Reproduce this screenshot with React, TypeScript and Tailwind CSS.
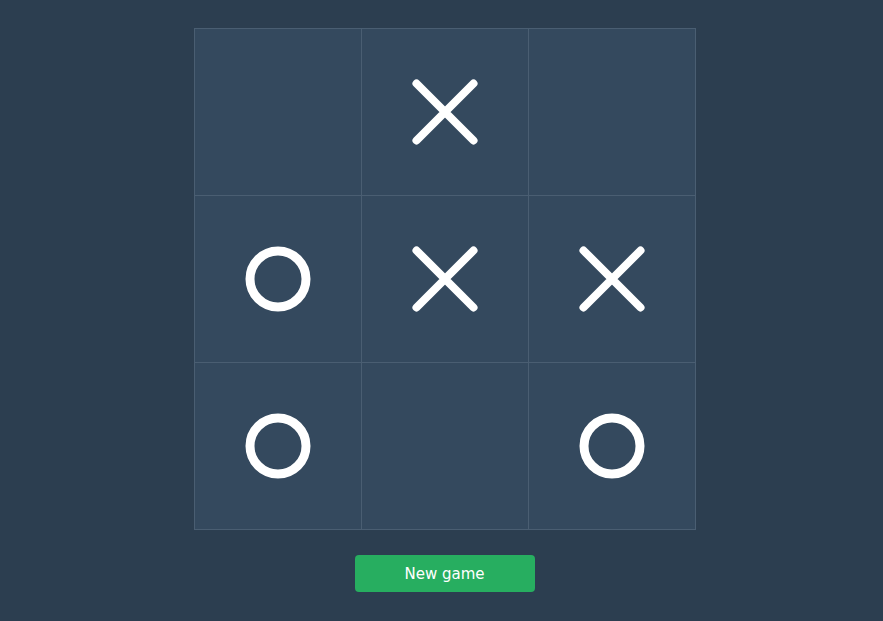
import React, { useState } from 'react';

type Mark = 'X' | 'O' | null;

const START: Mark[] = [null, 'X', null, 'O', 'X', 'X', 'O', null, 'O'];

const Cross = () => (
  <svg width="70" height="70" viewBox="0 0 70 70">
    <path d="M6.5 6.5 L63.5 63.5 M63.5 6.5 L6.5 63.5" stroke="#ffffff" strokeWidth="8" strokeLinecap="round" fill="none" />
  </svg>
);

const Nought = () => (
  <svg width="70" height="70" viewBox="0 0 70 70">
    <circle cx="35" cy="35" r="28" stroke="#ffffff" strokeWidth="9" fill="none" />
  </svg>
);

export default function App() {
  const [cells, setCells] = useState<Mark[]>(START);

  return (
    <div className="min-h-[621px] w-full bg-[#2c3e50] flex flex-col items-center pt-[28px] pl-[6px] font-['DejaVu_Sans',Verdana,sans-serif]">
      <div className="grid grid-cols-[repeat(3,166px)] gap-px p-px bg-[#4a5e72]">
        {cells.map((c, i) => (
          <div key={i} className="w-[166px] h-[166px] bg-[#34495e] flex items-center justify-center">
            {c === 'X' && <Cross />}
            {c === 'O' && <Nought />}
          </div>
        ))}
      </div>
      <button
        type="button"
        onClick={() => setCells(Array(9).fill(null))}
        className="mt-[25px] w-[180px] h-[37px] rounded-[4px] bg-[#27ae60] text-white text-[15px] pt-px"
      >
        New game
      </button>
    </div>
  );
}
